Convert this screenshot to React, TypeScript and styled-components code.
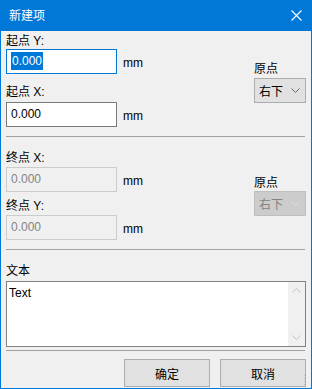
import React from 'react'
import styled, { createGlobalStyle } from 'styled-components'

type BoxState = 'focus' | 'normal' | 'disabled'

const Chevron = ({ up = false, color }: { up?: boolean; color: string }) => (
  <svg width='9' height='5' viewBox='0 0 9 5'>
    <polyline
      points={up ? '0.5,4.5 4.5,0.5 8.5,4.5' : '0.5,0.5 4.5,4.5 8.5,0.5'}
      fill='none'
      stroke={color}
      strokeWidth='1'
    />
  </svg>
)

const App = () => {
  return (
    <>
      <GlobalStyle />
      <Window>
        <TitleBar>
          <TitleText>新建项</TitleText>
          <svg width='11' height='11' viewBox='0 0 11 11'>
            <path d='M0.5 0.5 L10.5 10.5 M10.5 0.5 L0.5 10.5' stroke='#ffffff' strokeWidth='1.1' />
          </svg>
        </TitleBar>
        <Frame>
          <Group>
            <Fields>
              <FieldLabel $gap={2}>起点 Y:</FieldLabel>
              <Row>
                <TextBox $state='focus'>
                  <Selected>0.000</Selected>
                </TextBox>
                <Unit>mm</Unit>
              </Row>
              <FieldLabel $gap={10}>起点 X:</FieldLabel>
              <Row $gap={2}>
                <TextBox $state='normal'>0.000</TextBox>
                <Unit>mm</Unit>
              </Row>
            </Fields>
            <Origin $top={30}>
              <OriginLabel>原点</OriginLabel>
              <Combo $gap={1}>
                <span>右下</span>
                <Chevron color='#6a6a6a' />
              </Combo>
            </Origin>
          </Group>
          <Divider $gap={9} />
          <Group>
            <Fields>
              <FieldLabel $gap={12}>终点 X:</FieldLabel>
              <Row $gap={1}>
                <TextBox $state='disabled'>0.000</TextBox>
                <Unit>mm</Unit>
              </Row>
              <FieldLabel $gap={6}>终点 Y:</FieldLabel>
              <Row $gap={1}>
                <TextBox $state='disabled'>0.000</TextBox>
                <Unit>mm</Unit>
              </Row>
            </Fields>
            <Origin $top={37}>
              <OriginLabel>原点</OriginLabel>
              <Combo $disabled>
                <span>右下</span>
                <Chevron color='#dedede' />
              </Combo>
            </Origin>
          </Group>
          <Divider $gap={9} />
          <FieldLabel $gap={12}>文本</FieldLabel>
          <TextArea>
            <TextContent>Text</TextContent>
            <ScrollBar>
              <ScrollArrow>
                <Chevron up color='#c2c2c2' />
              </ScrollArrow>
              <ScrollArrow>
                <Chevron color='#c2c2c2' />
              </ScrollArrow>
            </ScrollBar>
          </TextArea>
          <Divider $gap={3} />
          <ButtonRow>
            <Button>确定</Button>
            <Button>取消</Button>
          </ButtonRow>
          <Grip width='4' height='10' viewBox='0 0 4 10'>
            <rect x='0' y='0' width='1' height='1' fill='#c4c4c4' />
            <rect x='0' y='3' width='1' height='1' fill='#c4c4c4' />
            <rect x='0' y='6' width='1' height='1' fill='#c4c4c4' />
            <rect x='0' y='9' width='1' height='1' fill='#c4c4c4' />
          </Grip>
        </Frame>
      </Window>
    </>
  )
}

export default App

const GlobalStyle = createGlobalStyle`
  html, body {
    margin: 0;
    padding: 0;
    background: #ffffff;
  }
  body {
    font-family: "Liberation Sans", "Noto Sans CJK SC", sans-serif;
    font-size: 12px;
    color: #000000;
  }
`

const Window = styled.div`
  width: 312px;
  height: 389px;
  display: flex;
  flex-direction: column;
  background: #f0f0f0;
`

const TitleBar = styled.div`
  height: 31px;
  flex-shrink: 0;
  background: #0078d7;
  display: flex;
  align-items: center;
  justify-content: space-between;
  padding: 0 10px 0 9px;
  box-sizing: border-box;
`

const TitleText = styled.span`
  color: #ffffff;
  font-size: 12px;
  line-height: 16px;
`

const Frame = styled.div`
  position: relative;
  flex: 1;
  display: flex;
  flex-direction: column;
  padding: 0 5px 1px;
  border: 1px solid #0078d7;
  border-top: none;
`

const Group = styled.div`
  display: flex;
  justify-content: space-between;
`

const Fields = styled.div`
  display: flex;
  flex-direction: column;
`

const FieldLabel = styled.div<{ $gap: number }>`
  margin-top: ${({ $gap }) => $gap}px;
  height: 16px;
  line-height: 16px;
  white-space: pre;
`

const Row = styled.div<{ $gap?: number }>`
  display: flex;
  gap: 6px;
  margin-top: ${({ $gap = 0 }) => $gap}px;
`

const TextBox = styled.div<{ $state: BoxState }>`
  width: 111px;
  height: 25px;
  box-sizing: border-box;
  padding-left: 4px;
  line-height: 23px;
  border: 1px solid
    ${({ $state }) =>
      $state === 'focus' ? '#0078d7' : $state === 'disabled' ? '#cccccc' : '#7a7a7a'};
  background: ${({ $state }) => ($state === 'disabled' ? '#f0f0f0' : '#ffffff')};
  color: ${({ $state }) => ($state === 'disabled' ? '#838383' : '#000000')};
`

const Selected = styled.span`
  display: inline-block;
  height: 18px;
  line-height: 18px;
  padding: 0 1px;
  background: #0078d7;
  color: #ffffff;
  vertical-align: middle;
  margin-top: -2px;
`

const Unit = styled.span`
  padding-top: 6px;
  line-height: 16px;
`

const Origin = styled.div<{ $top: number }>`
  width: 52px;
  padding-top: ${({ $top }) => $top}px;
  display: flex;
  flex-direction: column;
`

const OriginLabel = styled.div`
  height: 16px;
  line-height: 16px;
`

const Combo = styled.div<{ $disabled?: boolean; $gap?: number }>`
  margin-top: ${({ $gap = 0 }) => $gap}px;
  height: 25px;
  box-sizing: border-box;
  display: flex;
  align-items: center;
  justify-content: space-between;
  padding: 0 5px 0 4px;
  border: 1px solid ${({ $disabled }) => ($disabled ? '#bfbfbf' : '#adadad')};
  background: ${({ $disabled }) => ($disabled ? '#cccccc' : '#e1e1e1')};
  color: ${({ $disabled }) => ($disabled ? '#838383' : '#000000')};
`

const Divider = styled.div<{ $gap: number }>`
  margin-top: ${({ $gap }) => $gap}px;
  height: 1px;
  border-top: 1px solid #a0a0a0;
  border-bottom: 0;
  margin-right: 1px;
  margin-bottom: 0;
  box-sizing: content-box;
  height: 0;
  padding-bottom: 1px;
`

const TextArea = styled.div`
  margin-top: 2px;
  height: 66px;
  box-sizing: border-box;
  border: 1px solid #828282;
  background: #ffffff;
  display: flex;
`

const TextContent = styled.div`
  flex: 1;
  padding: 3px 2px;
  line-height: 16px;
`

const ScrollBar = styled.div`
  width: 17px;
  background: #f0f0f0;
  display: flex;
  flex-direction: column;
  justify-content: space-between;
`

const ScrollArrow = styled.div`
  height: 17px;
  display: flex;
  align-items: center;
  justify-content: center;
`

const ButtonRow = styled.div`
  margin-top: 7px;
  display: flex;
  justify-content: flex-end;
  gap: 10px;
`

const Button = styled.div`
  width: 86px;
  height: 28px;
  box-sizing: border-box;
  border: 1px solid #adadad;
  background: #e1e1e1;
  display: flex;
  align-items: center;
  justify-content: center;
`

const Grip = styled.svg`
  position: absolute;
  right: 3px;
  bottom: 3px;
`
